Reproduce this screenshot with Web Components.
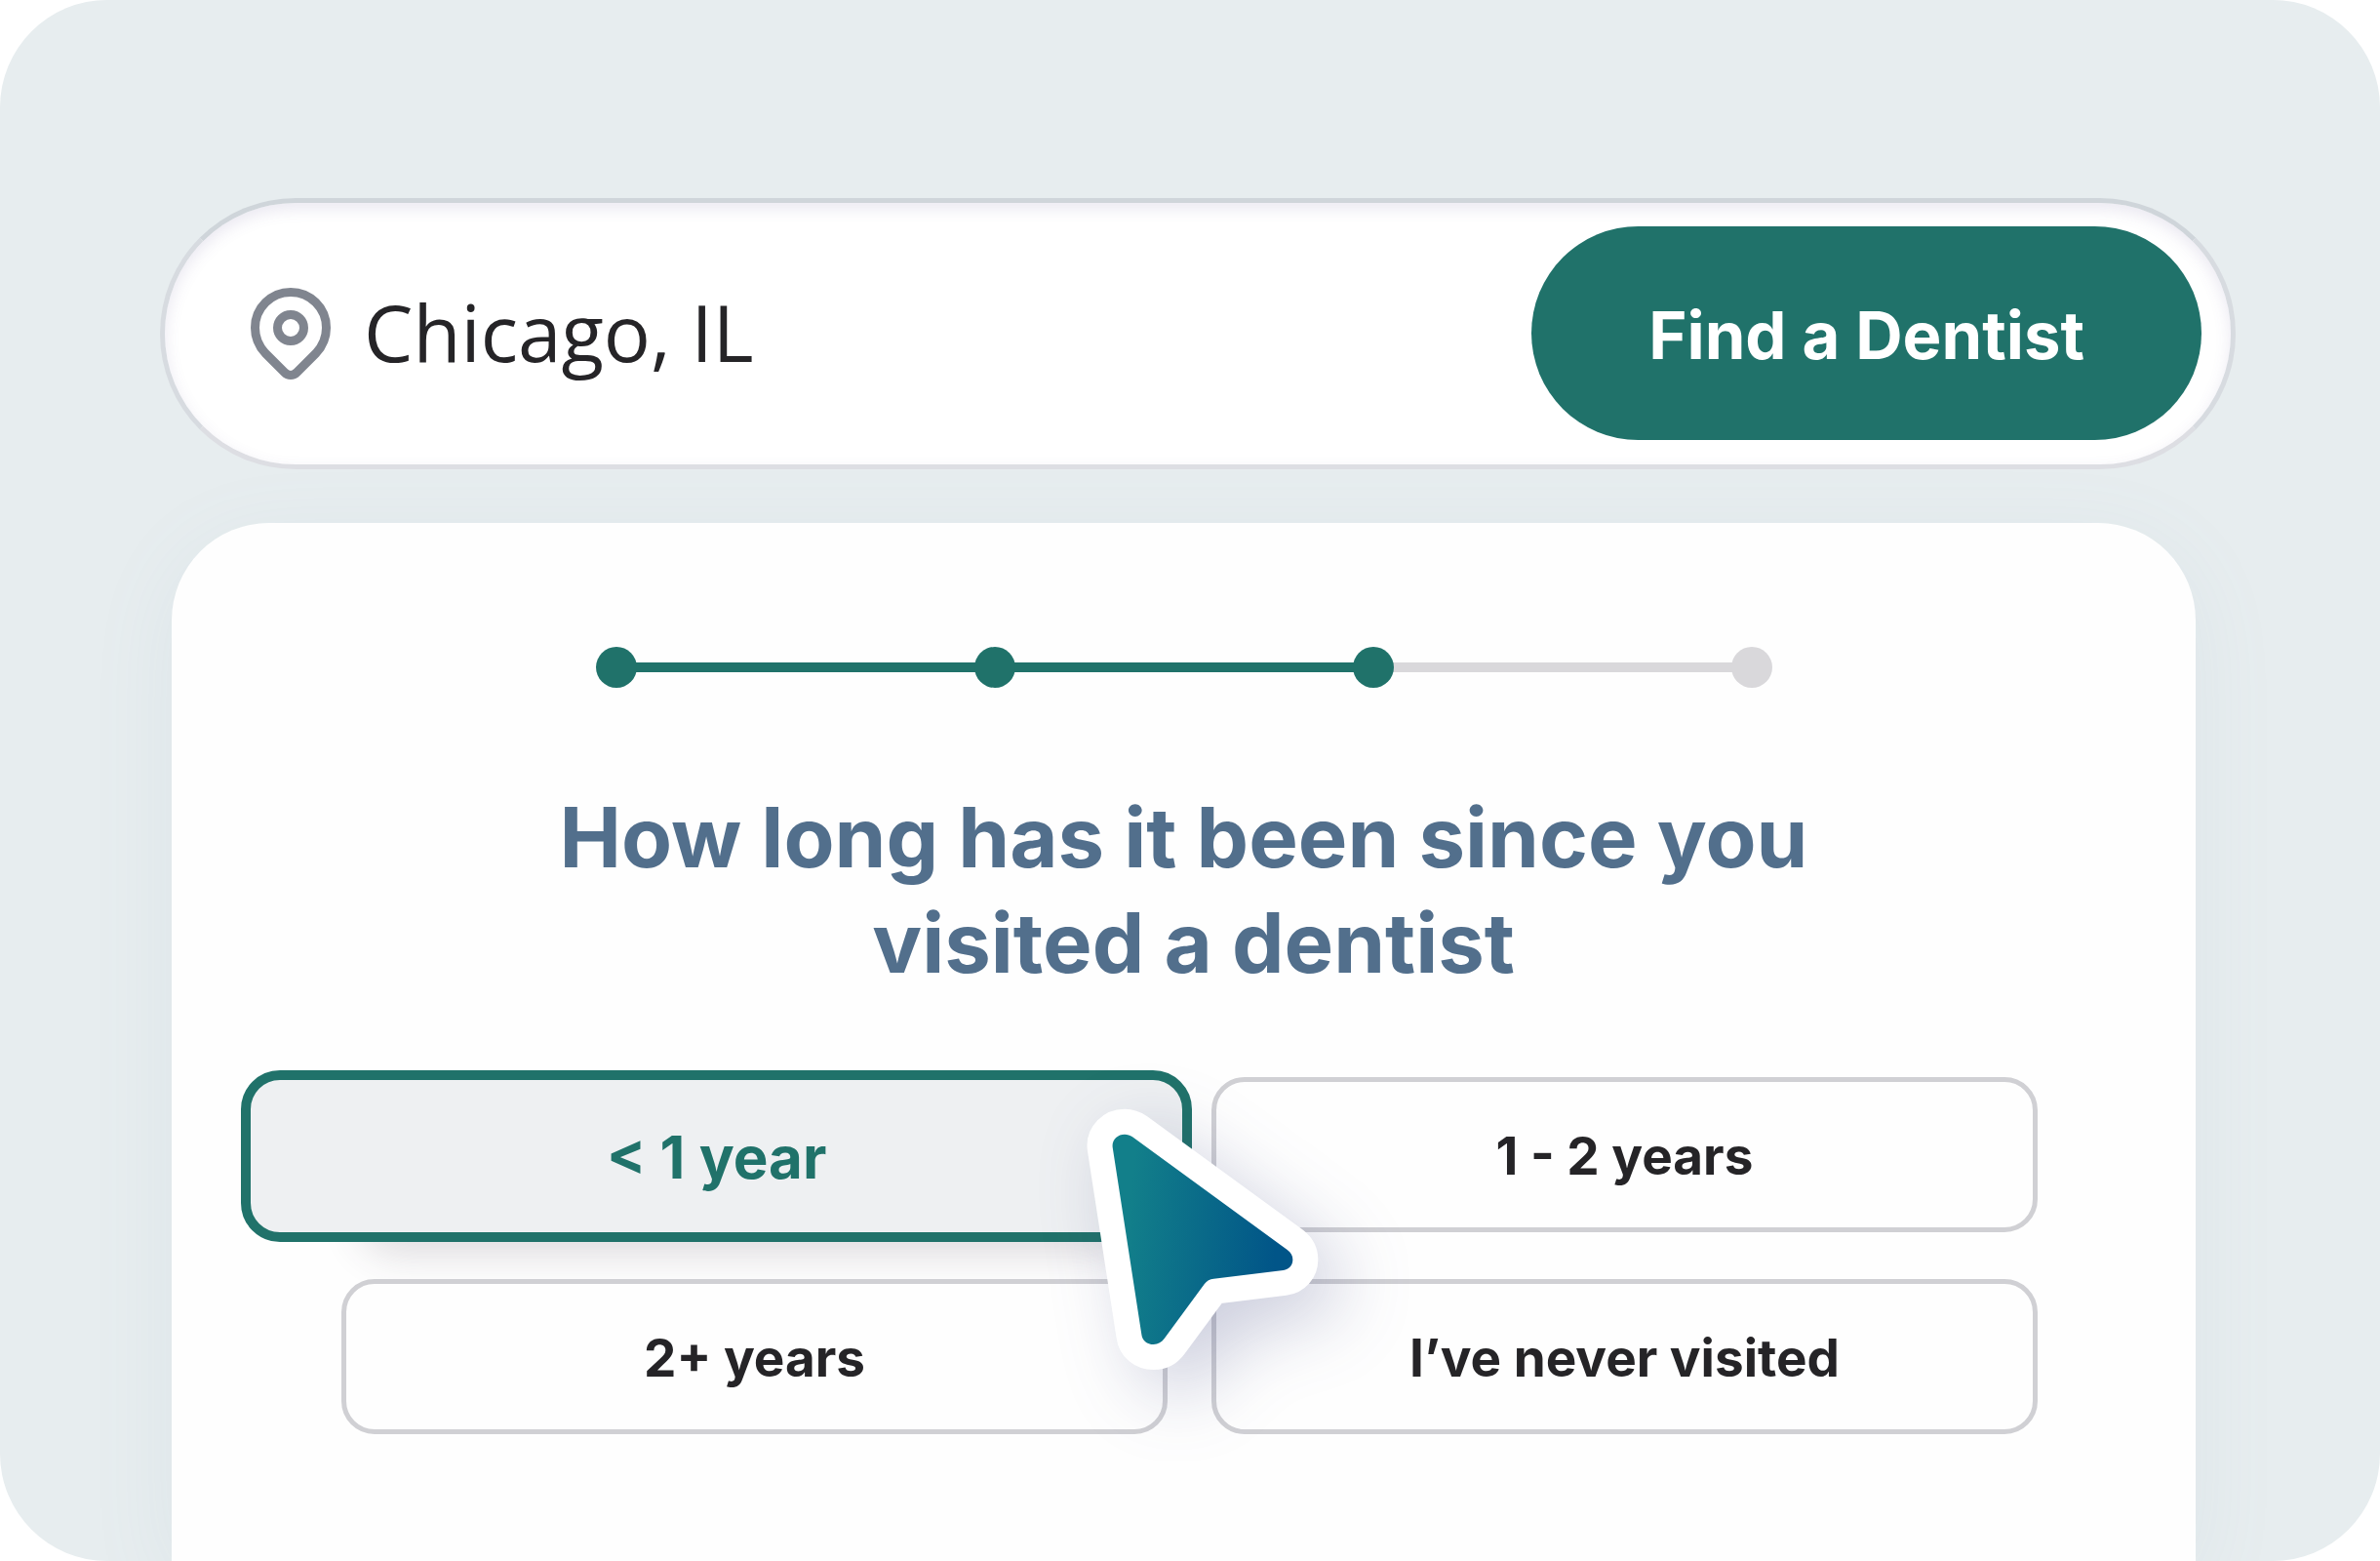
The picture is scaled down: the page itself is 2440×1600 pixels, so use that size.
<!DOCTYPE html>
<html lang="en">
<head>
<meta charset="utf-8">
<title>Find a Dentist</title>
<style>
    :root {
        --green: #20726a;
        --ink: #252427;
        --slate: #526f8c;
        --line: #d0d0d4;
    }
    body {
        margin: 0;
        background: white;
        color: var(--ink);
        font-family: Inter, "Liberation Sans", sans-serif;
    }
</style>
</head>
<body>
<app-stage>
    <search-bar value="Chicago, IL">Find a Dentist</search-bar>
    <question-card>
        <step-progress slot="progress" total="4" current="3"></step-progress>
        <span slot="question">How long has it been since you<br>&nbsp;visited a dentist</span>
        <answer-option selected>&lt; 1 year</answer-option>
        <answer-option>1 - 2 years</answer-option>
        <answer-option>2+ years</answer-option>
        <answer-option>I’ve never visited</answer-option>
        <mouse-pointer slot="pointer"></mouse-pointer>
    </question-card>
</app-stage>

<script>
/* Build a template element from a string of markup */
function makeTemplate(html) {
    const template = document.createElement("template");
    template.innerHTML = html;
    return template;
}

/* || Stage */
const stageTemplate = makeTemplate(`
    <style>
    :host {
        box-sizing: border-box;
        min-height: 100vh;
        display: flex;
        flex-direction: column;
        padding: 203px 148px 0 164px;
        gap: 55px;
        border-radius: 110px;
        overflow: hidden;
        background: #e7edef;
    }
    </style>
    <slot></slot>
`);
class AppStage extends HTMLElement {
    constructor() {
        super();
        this.attachShadow( {mode: "open"} );
        this.shadowRoot.appendChild(stageTemplate.content.cloneNode(true));
    }
}
customElements.define("app-stage", AppStage);

/* || Search bar */
const searchBarTemplate = makeTemplate(`
    <style>
    :host { display: block }
    form {
        display: flex;
        align-items: center;
        padding: 24px 30px 25px 88px;
        border: 5px solid #dddee3;
        border-top-color: #cfd5da;
        border-left-color: #d7dbe0;
        border-right-color: #d7dbe0;
        border-radius: 140px;
        background: white;
        box-shadow: inset 0 6px 16px rgb(90, 80, 150, 0.13);
    }
    label { display: flex }
    svg { width: 82px; height: 94px }
    input {
        flex: 1;
        min-width: 0;
        margin: 0;
        padding: 0 32px 4px 34px;
        border: none;
        outline: none;
        background: none;
        color: var(--ink);
        font: 80px/110px "Open Sans", "Noto Sans", sans-serif;
    }
    button {
        padding: 4px 120px 0;
        height: 219px;
        border: none;
        border-radius: 110px;
        background: var(--green);
        color: white;
        font: 700 67px/80px Inter, "Liberation Sans", sans-serif;
        white-space: nowrap;
    }
    </style>
    <form>
        <label for="place" aria-label="Location">
            <svg viewBox="0 0 82 94" fill="none" stroke="#80858f" stroke-width="9" stroke-linejoin="round">
                <path d="M41 4.500C21 4.500 4.500 20.500 4.500 41C4.500 52 8.500 60 15 67L34.500 86.500C38.500 90.500 43.500 90.500 47.500 86.500L67 67C73.500 60 77.500 52 77.500 41C77.500 20.500 61 4.500 41 4.500Z"/>
                <circle cx="41" cy="41" r="13.500"/>
            </svg>
        </label>
        <input id="place" type="text">
        <button type="button"><slot></slot></button>
    </form>
`);
class SearchBar extends HTMLElement {
    constructor() {
        super();
        this.attachShadow( {mode: "open"} );
        this.shadowRoot.appendChild(searchBarTemplate.content.cloneNode(true));
        this._input = this.shadowRoot.querySelector("input");
    }
    connectedCallback() {
        this._input.value = this.getAttribute("value") || "";
    }
}
customElements.define("search-bar", SearchBar);

/* || Question card */
const questionCardTemplate = makeTemplate(`
    <style>
    :host {
        flex: 1;
        display: flex;
        flex-direction: column;
        align-items: center;
        margin: 0 41px 0 12px;
        padding: 127px 0 80px;
        border-radius: 100px 100px 0 0;
        background: #fefefe;
        box-shadow: 0 20px 90px rgb(120, 150, 180, 0.08);
    }
    h1 {
        margin: 100px 0 83px;
        color: var(--slate);
        font-size: 85px;
        line-height: 108px;
        font-weight: 700;
        text-align: center;
    }
    .answers {
        align-self: stretch;
        position: relative;
        display: grid;
        grid-template-columns: 1fr 1fr;
        gap: 48px 45px;
        padding: 0 162px 0 174px;
    }
    </style>
    <slot name=progress></slot>
    <h1><slot name=question></slot></h1>
    <div class="answers">
        <slot></slot>
        <slot name=pointer></slot>
    </div>
`);
class QuestionCard extends HTMLElement {
    constructor() {
        super();
        this.attachShadow( {mode: "open"} );
        this.shadowRoot.appendChild(questionCardTemplate.content.cloneNode(true));
    }
}
customElements.define("question-card", QuestionCard);

/* || Progress dots joined by a line */
const stepProgressTemplate = makeTemplate(`
    <style>
    :host {
        display: block;
        width: 1206px;
        max-width: 100%;
    }
    ol {
        display: flex;
        margin: 0;
        padding: 0;
        list-style: none;
    }
    li {
        flex: 1;
        display: flex;
        align-items: center;
    }
    li:last-child { flex: none }
    li::before {
        content: "";
        z-index: 1;
        width: 42px;
        height: 42px;
        border-radius: 50%;
        background: #d9d8db;
    }
    li:not(:last-child)::after {
        content: "";
        flex: 1;
        height: 10px;
        margin: 0 -2px;
        background: #d9d8db;
    }
    li.done::before, li.passed::after { background: var(--green) !important }
    </style>
    <ol></ol>
`);
class StepProgress extends HTMLElement {
    constructor() {
        super();
        this.attachShadow( {mode: "open"} );
        this.shadowRoot.appendChild(stepProgressTemplate.content.cloneNode(true));
        this._list = this.shadowRoot.querySelector("ol");
    }
    connectedCallback() {
        var total = Number(this.getAttribute("total"));
        var current = Number(this.getAttribute("current"));
        this._list.replaceChildren();
        for (var i = 1; i <= total; i++) {
            var step = document.createElement("li");
            step.classList.toggle("done", i <= current);
            step.classList.toggle("passed", i < current);
            this._list.appendChild(step);
        }
    }
}
customElements.define("step-progress", StepProgress);

/* || Answer option, grows out of its grid cell when selected */
const answerOptionTemplate = makeTemplate(`
    <style>
    :host {
        display: grid;
        position: relative;
        height: 159px;
    }
    button {
        padding: 2px 0 0;
        border: 5px solid var(--line);
        border-radius: 34px;
        background: #fefefe;
        color: var(--ink);
        font: 700 53px/64px Inter, "Liberation Sans", sans-serif;
    }
    :host([selected]) {
        height: 176px;
        margin: -7px -25px -10px -103px;
    }
    :host([selected]) button {
        position: relative;
        border: 10px solid var(--green);
        border-radius: 40px;
        background: #eef0f2;
        color: var(--green);
        font-size: 60px;
    }
    :host([selected])::before {
        content: "";
        position: absolute;
        inset: 60px 60px 10px 120px;
        border-radius: 40px;
        box-shadow: 0 24px 40px rgb(60, 50, 70, 0.16);
    }
    </style>
    <button type="button"><slot></slot></button>
`);
class AnswerOption extends HTMLElement {
    constructor() {
        super();
        this.attachShadow( {mode: "open"} );
        this.shadowRoot.appendChild(answerOptionTemplate.content.cloneNode(true));
        this._button = this.shadowRoot.querySelector("button");
        this._select = this._select.bind(this);
        this._button.addEventListener("click", this._select);
    }
    connectedCallback() {
        this._button.setAttribute("aria-pressed", this.hasAttribute("selected"));
    }
    _select() {
        for (var option of this.parentElement.querySelectorAll("answer-option")) {
            option.toggleAttribute("selected", option == this);
            option.connectedCallback();
        }
    }
}
customElements.define("answer-option", AnswerOption);

/* || Mouse pointer lying over the answers */
const mousePointerTemplate = makeTemplate(`
    <style>
    :host {
        position: absolute;
        top: 30px;
        left: calc(50% - 102px);
        pointer-events: none;
    }
    svg {
        display: block;
        width: 241px;
        height: 271px;
        overflow: visible;
        filter: drop-shadow(24px 24px 38px rgb(50, 60, 120, 0.24));
    }
    </style>
    <svg viewBox="99 159 723 813" aria-hidden="true">
        <defs>
            <linearGradient id="sea" gradientUnits="userSpaceOnUse" x1="230" y1="520" x2="690" y2="570">
                <stop offset="0" stop-color="#127f8a"/>
                <stop offset="1" stop-color="#015588"/>
            </linearGradient>
            <path id="arrow" d="M185 285C182 262 200 245 222 245C231 245 239 248 246 253L722 600C734 609 739 618 739 630C739 648 727 661 710 663L496 689C484 690 475 695 467 706L344 873C336 884 325 891 311 891C291 891 276 879 274 860Z"/>
        </defs>
        <use href="#arrow" fill="white" stroke="white" stroke-width="156" stroke-linejoin="round"/>
        <use href="#arrow" fill="url(#sea)"/>
    </svg>
`);
class MousePointer extends HTMLElement {
    constructor() {
        super();
        this.attachShadow( {mode: "open"} );
        this.shadowRoot.appendChild(mousePointerTemplate.content.cloneNode(true));
    }
}
customElements.define("mouse-pointer", MousePointer);
</script>
</body>
</html>
